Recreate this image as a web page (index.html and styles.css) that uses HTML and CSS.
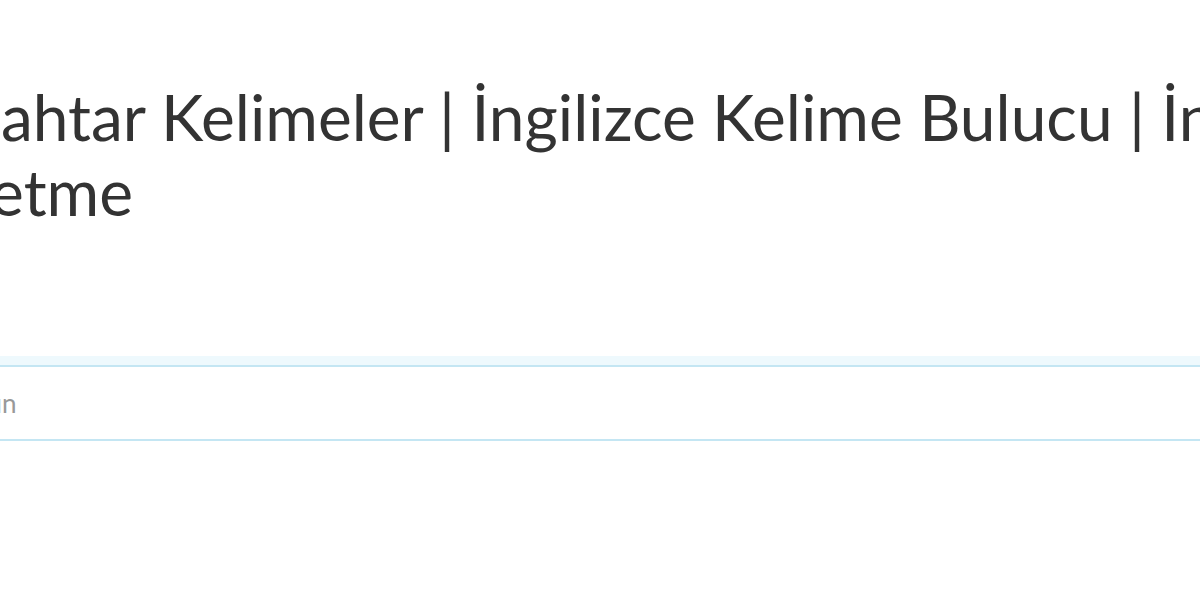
FILE: index.html
```html
<!DOCTYPE html>
<html lang="tr">
<head>
  <meta charset="UTF-8">
  <meta name="viewport" content="width=device-width, initial-scale=1.0">
  <title>Anahtar Kelimeler | İngilizce Kelime Bulucu</title>
  <link rel="stylesheet" href="styles.css">
</head>
<body>
  <div class="page">
    <h1 class="page-title">Anahtar Kelimeler | İngilizce Kelime Bulucu | İngilizce Kelime Üretme</h1>
    <div class="search-box">
      <input type="text" class="search-input" placeholder="Arayın">
    </div>
  </div>
</body>
</html>
```

FILE: styles.css
```css
html,
body {
  overflow: hidden;
}

body {
  margin: 0;
  padding: 0;
  background-color: #ffffff;
  color: #333333;
  font-family: "Lato", "Open Sans", sans-serif;
}

.page {
  width: 1800px;
  margin-left: -78px;
}

.page-title {
  font-size: 64px;
  font-weight: 400;
  line-height: 75px;
  margin: 79px 0 0;
}

.search-box {
  margin-top: 136px;
}

.search-input {
  box-sizing: border-box;
  width: 100%;
  height: 76px;
  padding: 0 0 0 19px;
  border: 2px solid #c4e6f3;
  border-radius: 4px;
  box-shadow: 0 0 0 9px #eef9fd;
  font-family: "Lato", "Open Sans", sans-serif;
  font-size: 26px;
  color: #555555;
  outline: none;
}

.search-input::placeholder {
  color: #999999;
}
```
